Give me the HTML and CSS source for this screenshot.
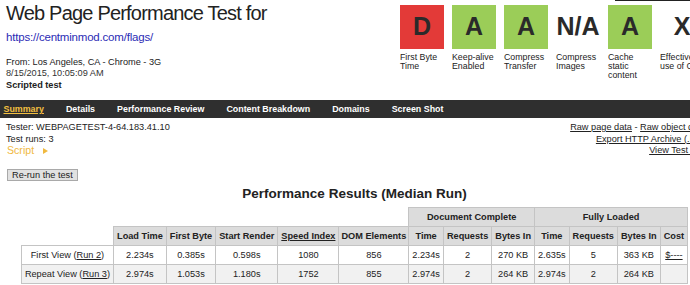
FILE: index.html
```html
<!DOCTYPE html>
<html lang="en">
<head>
    <meta charset="UTF-8">
    <meta name="viewport" content="width=device-width, initial-scale=1.0">
    <title>Web Page Performance Test</title>
    <link rel="stylesheet" href="styles.css">
</head>
<body>
    <div class="top-rule"></div>
    <div class="page">
        <header class="header">
            <div class="test-info">
                <h1>Web Page Performance Test for</h1>
                <a class="test-url" href="#">https://centminmod.com/flags/</a>
                <p class="test-meta">
                    From: Los Angeles, CA - Chrome - 3G<br>
                    <span class="test-date">8/15/2015, 10:05:09 AM</span><br>
                    <strong>Scripted test</strong>
                </p>
            </div>

            <div class="grades">
                <div class="grade">
                    <div class="grade-box grade-d">D</div>
                    <div class="grade-label">First Byte Time</div>
                </div>
                <div class="grade">
                    <div class="grade-box grade-a">A</div>
                    <div class="grade-label">Keep-alive Enabled</div>
                </div>
                <div class="grade">
                    <div class="grade-box grade-a">A</div>
                    <div class="grade-label">Compress Transfer</div>
                </div>
                <div class="grade">
                    <div class="grade-box">N/A</div>
                    <div class="grade-label">Compress Images</div>
                </div>
                <div class="grade">
                    <div class="grade-box grade-a">A</div>
                    <div class="grade-label">Cache static content</div>
                </div>
                <div class="grade">
                    <div class="grade-box">X</div>
                    <div class="grade-label">Effective use of CDN</div>
                </div>
            </div>
        </header>

        <nav class="tabs">
            <a href="#" class="active">Summary</a>
            <a href="#">Details</a>
            <a href="#">Performance Review</a>
            <a href="#">Content Breakdown</a>
            <a href="#">Domains</a>
            <a href="#">Screen Shot</a>
        </nav>

        <div class="run-info">
            <div>
                Tester: WEBPAGETEST-4-64.183.41.10<br>
                Test runs: 3<br>
                <span class="script">Script</span>
            </div>
            <div class="links">
                <a href="#">Raw page data</a> - <a href="#">Raw object data</a><br>
                <a href="#">Export HTTP Archive (.har)</a><br>
                <a href="#">View Test Log</a>
            </div>
        </div>

        <div class="rerun">
            <button type="button">Re-run the test</button>
        </div>

        <h2 class="results-title">Performance Results (Median Run)</h2>

        <table class="results">
            <tr>
                <th class="blank" colspan="6"></th>
                <th colspan="3">Document Complete</th>
                <th colspan="4">Fully Loaded</th>
            </tr>
            <tr>
                <th class="blank"></th>
                <th>Load Time</th>
                <th>First Byte</th>
                <th>Start Render</th>
                <th><a href="#">Speed Index</a></th>
                <th class="tight">DOM Elements</th>
                <th>Time</th>
                <th>Requests</th>
                <th>Bytes In</th>
                <th>Time</th>
                <th>Requests</th>
                <th>Bytes In</th>
                <th>Cost</th>
            </tr>
            <tr>
                <td>First View (<a href="#">Run 2</a>)</td>
                <td>2.234s</td>
                <td>0.385s</td>
                <td>0.598s</td>
                <td>1080</td>
                <td>856</td>
                <td>2.234s</td>
                <td>2</td>
                <td>270 KB</td>
                <td>2.635s</td>
                <td>5</td>
                <td>363 KB</td>
                <td><a href="#">$----</a></td>
            </tr>
            <tr class="repeat">
                <td>Repeat View (<a href="#">Run 3</a>)</td>
                <td>2.974s</td>
                <td>1.053s</td>
                <td>1.180s</td>
                <td>1752</td>
                <td>855</td>
                <td>2.974s</td>
                <td>2</td>
                <td>264 KB</td>
                <td>2.974s</td>
                <td>2</td>
                <td>264 KB</td>
                <td></td>
            </tr>
        </table>
    </div>
</body>
</html>
```

FILE: styles.css
```css
html {
    overflow: hidden;
}

body {
    margin: 0;
    font-family: "Liberation Sans", Arial, sans-serif;
    color: #222;
    background-color: #fff;
}

a {
    color: #222;
}

.top-rule {
    margin-left: 615px;
    height: 1px;
    background-color: #222;
}

.page {
    width: 709px;
}

/* header: test info on the left, grades on the right */
.header {
    display: flex;
    height: 99px;
}

.test-info {
    width: 400px;
    padding-left: 6px;
    box-sizing: border-box;
}

.test-info h1 {
    margin: 1px 0 0;
    font-size: 20px;
    line-height: 22px;
    font-weight: normal;
    letter-spacing: -0.8px;
}

.test-url {
    display: block;
    margin-top: 6.5px;
    font-size: 11.5px;
    line-height: 13px;
    letter-spacing: -0.2px;
    color: #2b2bb5;
    text-decoration: none;
}

.test-meta {
    margin: 13px 0 0;
    font-size: 9.2px;
    line-height: 11.7px;
}

.test-date {
    color: #333;
}

.grades {
    display: flex;
    gap: 8px;
    padding-top: 4px;
}

.grade {
    width: 44px;
    flex-shrink: 0;
}

.grade-box {
    height: 44px;
    padding-bottom: 2px;
    box-sizing: border-box;
    display: flex;
    align-items: center;
    justify-content: center;
    font-size: 25px;
    font-weight: bold;
    color: #2a2a2a;
}

.grade-a {
    background-color: #9bcd58;
}

.grade-d {
    background-color: #e33a38;
}

.grade-label {
    width: 47px;
    margin-top: 4px;
    font-size: 8.8px;
    line-height: 9px;
}

/* tab bar */
.tabs {
    display: flex;
    gap: 22px;
    height: 18px;
    padding-left: 3.5px;
    background-color: #2f2f2f;
    font-size: 8.9px;
    font-weight: bold;
    line-height: 18px;
}

.tabs a {
    color: #fff;
    text-decoration: none;
}

.tabs a.active {
    color: #f3c040;
    text-decoration: underline;
}

.run-info {
    display: flex;
    justify-content: space-between;
    padding: 4px 3px 0 6px;
    font-size: 9.2px;
    line-height: 11.7px;
}

.links {
    text-align: right;
}

.script {
    margin-left: 1px;
    color: #f0b93f;
    font-size: 10.6px;
}

.script::after {
    content: "";
    display: inline-block;
    margin-left: 9px;
    border-left: 5px solid #f0b93f;
    border-top: 3px solid transparent;
    border-bottom: 3px solid transparent;
}

.rerun {
    padding: 11px 0 0 7px;
}

.rerun button {
    display: block;
    margin: 0;
    padding: 0 4px;
    font-family: "Liberation Sans", Arial, sans-serif;
    font-size: 9.2px;
    line-height: 10px;
    color: #222;
    background-color: #e1e1e1;
    border: 1px solid #a9a9a9;
    border-radius: 0;
}

.results-title {
    margin: 5.3px 0 5px;
    text-align: center;
    font-size: 13.5px;
    line-height: 16px;
}

/* results table */
.results {
    margin: 0 auto;
    border-collapse: collapse;
    font-size: 9.2px;
}

.results th,
.results td {
    padding: 0 3px;
    line-height: 18px;
    text-align: center;
    white-space: nowrap;
    border: 1px solid #c4c4c4;
}

.results th {
    background-color: #dcdcdc;
}

.results th.tight {
    padding: 0 2px;
}

.results th.blank {
    background: none;
    border: none;
}

.results .repeat td {
    background-color: #f1f1f1;
}
```
